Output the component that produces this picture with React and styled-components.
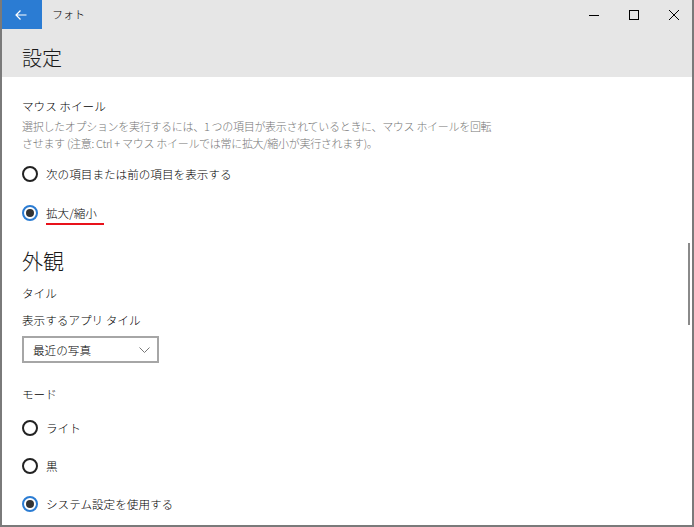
import React from 'react';
import styled, { createGlobalStyle } from 'styled-components';

const GlobalStyle = createGlobalStyle`
  html, body {
    margin: 0;
    padding: 0;
    background: #ffffff;
  }
  body {
    font-family: "Noto Sans CJK JP", "Noto Sans", "Liberation Sans", sans-serif;
    font-weight: 300;
    color: #000000;
  }
`;

const StyledWindow = styled.div`
  position: relative;
  width: 694px;
  height: 527px;
  box-sizing: border-box;
  border-left: 2px solid #7a7a7a;
  border-right: 2px solid #7a7a7a;
  border-bottom: 2px solid #7a7a7a;
  background: #ffffff;
  overflow: hidden;
  display: flex;
  flex-direction: column;
`;

const StyledTop = styled.div`
  background: #e6e6e6;
  margin-left: -2px;
  margin-right: -2px;
`;

const StyledTitleBar = styled.div`
  display: flex;
  align-items: center;
  height: 29px;
`;

const StyledBackButton = styled.div`
  display: flex;
  align-items: center;
  justify-content: center;
  width: 42px;
  height: 29px;
  background: #2b7cd3;
`;

const StyledAppName = styled.div`
  margin-left: 10px;
  font-size: 11px;
  line-height: 29px;
  flex: 1;
`;

const StyledControl = styled.div`
  display: flex;
  align-items: center;
  justify-content: center;
  width: 40px;
  height: 29px;
`;

const StyledHeader = styled.div`
  height: 48px;
  padding: 15px 0 0 22px;
  box-sizing: border-box;
  font-size: 20px;
  line-height: 28px;
  color: #1a1a1a;
`;

const StyledContent = styled.div`
  padding: 20px 0 0 20px;
  display: flex;
  flex-direction: column;
  align-items: flex-start;
`;

const StyledLabel = styled.div`
  font-size: 11.6px;
  line-height: 18px;
  margin-top: ${({ gap }) => gap || 0}px;
`;

const StyledDescription = styled.div`
  margin-top: 3px;
  font-size: 11px;
  line-height: 17px;
  color: #767676;
  white-space: nowrap;
  letter-spacing: -0.3px;
`;

const StyledSection = styled.div`
  font-size: 21px;
  line-height: 28px;
  color: #1a1a1a;
  margin-top: ${({ gap }) => gap}px;
`;

const StyledRadioRow = styled.div`
  display: flex;
  align-items: center;
  height: 20px;
  margin-top: ${({ gap }) => gap}px;
  cursor: pointer;
`;

const StyledRadio = styled.div`
  display: flex;
  align-items: center;
  justify-content: center;
  width: 16px;
  height: 16px;
  box-sizing: border-box;
  border-radius: 50%;
  border: 2px solid ${({ isActive }) => (isActive ? '#2b7cd3' : '#222222')};
  background: #ffffff;
`;

const StyledDot = styled.div`
  width: 8px;
  height: 8px;
  border-radius: 50%;
  background: #333333;
`;

const StyledRadioLabel = styled.span`
  margin-left: 8px;
  font-size: 11.6px;
  line-height: 18px;
  padding-bottom: ${({ marked }) => (marked ? '1px' : '0')};
  padding-right: ${({ marked }) => (marked ? '7px' : '0')};
  border-bottom: ${({ marked }) => (marked ? '2px solid #e8121b' : 'none')};
  margin-top: ${({ marked }) => (marked ? '3px' : '0')};
`;

const StyledSelect = styled.div`
  display: flex;
  align-items: center;
  justify-content: space-between;
  width: 137px;
  height: 27px;
  box-sizing: border-box;
  margin-top: 7px;
  padding: 0 7px 0 9px;
  border: 2px solid #a6a6a6;
  font-size: 11.6px;
`;

const StyledScrollIndicator = styled.div`
  position: absolute;
  right: 2px;
  top: 243px;
  width: 2px;
  height: 82px;
  background: #8a8a8a;
`;

const mouseOptions = [
  { id: 'next', label: '次の項目または前の項目を表示する' },
  { id: 'zoom', label: '拡大/縮小', marked: true },
];

const modeOptions = [
  { id: 'light', label: 'ライト' },
  { id: 'dark', label: '黒' },
  { id: 'system', label: 'システム設定を使用する' },
];

const Radios = ({ data, selected, onChange, firstGap, gap }) => (
  <>
    {data.map((item, i) => (
      <StyledRadioRow key={item.id} gap={i === 0 ? firstGap : gap} onClick={() => onChange(item.id)}>
        <StyledRadio isActive={item.id === selected}>
          {item.id === selected && <StyledDot />}
        </StyledRadio>
        <StyledRadioLabel marked={item.marked}>{item.label}</StyledRadioLabel>
      </StyledRadioRow>
    ))}
  </>
);

export default function App() {
  const [wheel, setWheel] = React.useState('zoom');
  const [mode, setMode] = React.useState('system');

  return (
    <StyledWindow>
      <GlobalStyle />
      <StyledTop>
        <StyledTitleBar>
          <StyledBackButton>
            <svg width="12" height="10" viewBox="0 0 12 10" fill="none" stroke="#ffffff" strokeWidth="1.2">
              <path d="M11.5 5H1M5.5 0.5L1 5l4.5 4.5" />
            </svg>
          </StyledBackButton>
          <StyledAppName>フォト</StyledAppName>
          <StyledControl>
            <svg width="10" height="10" viewBox="0 0 10 10" stroke="#000" strokeWidth="1">
              <path d="M0 5.5h10" />
            </svg>
          </StyledControl>
          <StyledControl>
            <svg width="10" height="10" viewBox="0 0 10 10" fill="none" stroke="#000" strokeWidth="1">
              <rect x="0.5" y="0.5" width="9" height="9" />
            </svg>
          </StyledControl>
          <StyledControl>
            <svg width="10" height="10" viewBox="0 0 10 10" stroke="#000" strokeWidth="1">
              <path d="M0 0l10 10M10 0L0 10" />
            </svg>
          </StyledControl>
        </StyledTitleBar>
        <StyledHeader>設定</StyledHeader>
      </StyledTop>

      <StyledContent>
        <StyledLabel>マウス ホイール</StyledLabel>
        <StyledDescription>
          選択したオプションを実行するには、1 つの項目が表示されているときに、マウス ホイールを回転
          <br />
          させます (注意: Ctrl + マウス ホイールでは常に拡大/縮小が実行されます)。
        </StyledDescription>
        <Radios data={mouseOptions} selected={wheel} onChange={setWheel} firstGap={12} gap={19} />

        <StyledSection gap={23}>外観</StyledSection>
        <StyledLabel gap={10}>タイル</StyledLabel>
        <StyledLabel gap={9}>表示するアプリ タイル</StyledLabel>
        <StyledSelect>
          <span>最近の写真</span>
          <svg width="11" height="6" viewBox="0 0 11 6" fill="none" stroke="#777" strokeWidth="1">
            <path d="M0.5 0.5L5.5 5.5l5-5" />
          </svg>
        </StyledSelect>

        <StyledLabel gap={22}>モード</StyledLabel>
        <Radios data={modeOptions} selected={mode} onChange={setMode} firstGap={15} gap={18} />
      </StyledContent>

      <StyledScrollIndicator />
    </StyledWindow>
  );
}
